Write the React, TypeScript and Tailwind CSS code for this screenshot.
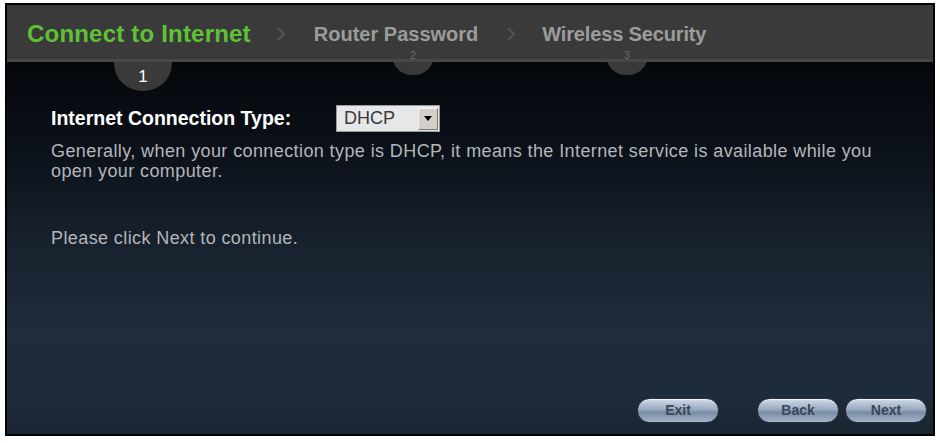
import React from "react";

function Chevron({ ml, mr }: { ml: string; mr: string }) {
  return (
    <svg width="10" height="16" viewBox="0 0 10 16" className={`${ml} ${mr}`}>
      <path d="M2 2 L8 8 L2 14" stroke="#525252" strokeWidth="2.5" fill="none" />
    </svg>
  );
}

function PillButton({ label }: { label: string }) {
  return (
    <div className="w-[82px] h-[25px] rounded-full border border-[#2a3442] bg-[linear-gradient(to_bottom,#d0dae6_0%,#9aabc1_45%,#7a8ca5_58%,#a3b3c8_100%)] shadow-[inset_0_1px_1px_rgba(255,255,255,0.7)] flex items-center justify-center text-[14px] font-bold text-[#3a4859]">
      {label}
    </div>
  );
}

export default function App() {
  return (
    <div className="w-[940px] h-[443px] bg-white pt-[3px] pl-[5px]" style={{ fontFamily: '"Liberation Sans", Arial, sans-serif' }}>
      <div className="relative w-[930px] h-[433px] border-2 border-black flex flex-col overflow-hidden">
        <div className="h-[57px] bg-[#3a3a3a] border-b-[3px] border-b-[#474747] flex items-center pl-[20px] pt-[4px] shrink-0 relative z-10">
          <span className="text-[24px] font-bold text-[#5fc236] tracking-[0.2px]">Connect to Internet</span>
          <Chevron ml="ml-[25px]" mr="mr-[28px]" />
          <span className="text-[20px] font-bold text-[#9c9c9c]">Router Password</span>
          <Chevron ml="ml-[28px]" mr="mr-[26px]" />
          <span className="text-[20px] font-bold text-[#9c9c9c] tracking-[-0.15px]">Wireless Security</span>
        </div>
        {/* step bumps */}
        <div className="absolute left-[107px] top-[30px] w-[58px] h-[56px] rounded-full bg-[#3a3a3a] z-0 flex items-end justify-center pb-[6px]">
          <span className="text-[17px] text-white leading-none">1</span>
        </div>
        <div className="absolute left-[385px] top-[30px] w-[42px] h-[40px] rounded-full bg-[#3a3a3a] z-0"></div>
        <div className="absolute left-[385px] top-[46px] w-[42px] text-center text-[10px] text-[#6e6e6e] z-20 leading-none">2</div>
        <div className="absolute left-[599px] top-[30px] w-[42px] h-[40px] rounded-full bg-[#3a3a3a] z-0"></div>
        <div className="absolute left-[599px] top-[46px] w-[42px] text-center text-[10px] text-[#6e6e6e] z-20 leading-none">3</div>

        <div className="flex-1 flex flex-col bg-[linear-gradient(to_bottom,#04070b_0%,#0c121a_25%,#18222e_50%,#1f2c3b_72%,#1e2b3a_90%,#1a2532_100%)] pl-[44px] pr-[8px]">
          <div className="flex items-center mt-[43px] h-[27px]">
            <span className="text-[19.5px] font-bold text-white w-[285px]">Internet Connection Type:</span>
            <div className="w-[104px] h-[27px] bg-[#e6e7e8] border border-[#9a9a9a] flex items-center justify-between pl-[7px] pr-[1px]">
              <span className="text-[18px] text-[#3a3a3a]">DHCP</span>
              <div className="w-[20px] h-[22px] bg-[#d4d0c8] border border-t-[#f4f4f4] border-l-[#f4f4f4] border-r-[#777] border-b-[#777] flex items-center justify-center">
                <svg width="8" height="5" viewBox="0 0 8 5"><path d="M0 0 L8 0 L4 5 Z" fill="#000" /></svg>
              </div>
            </div>
          </div>
          <p className="mt-[9px] text-[18px] leading-[20px] tracking-[0.4px] text-[#b3b6ba] whitespace-nowrap">
            Generally, when your connection type is DHCP, it means the Internet service is available while you
            <br />
            open your computer.
          </p>
          <p className="mt-[47px] text-[18px] leading-[20px] tracking-[0.4px] text-[#b3b6ba]">Please click Next to continue.</p>
          <div className="mt-auto mb-[11px] flex items-center">
            <div className="ml-[586px]"><PillButton label="Exit" /></div>
            <div className="ml-[38px]"><PillButton label="Back" /></div>
            <div className="ml-[6px]"><PillButton label="Next" /></div>
          </div>
        </div>
      </div>
    </div>
  );
}
